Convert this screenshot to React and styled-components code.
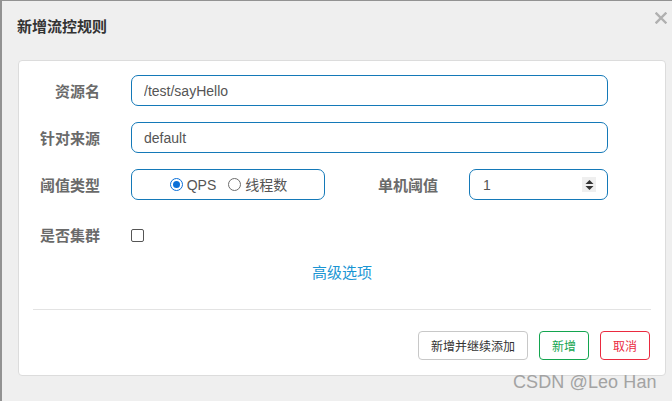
import React from "react";
import styled, { createGlobalStyle } from "styled-components";

const Global = createGlobalStyle`
  html, body { margin: 0; padding: 0; }
  body {
    background: #929292;
    font-family: "Liberation Sans", "Noto Sans CJK SC", sans-serif;
    overflow: hidden;
  }
`;

const Page = styled.div`
  position: relative;
  width: 672px;
  height: 401px;
  overflow: hidden;
`;

const Modal = styled.div`
  margin: 1px 0 0 2px;
  width: 670px;
  height: 400px;
  background: #efefef;
  display: flex;
  flex-direction: column;
`;

const Header = styled.div`
  height: 59px;
  display: flex;
  justify-content: space-between;
  align-items: flex-start;
  padding: 15px 5px 0 15px;
  box-sizing: border-box;
`;

const Title = styled.h4`
  margin: 0;
  font-size: 15px;
  line-height: 20px;
  font-weight: bold;
  color: #333;
  font-family: "Noto Sans CJK SC", sans-serif;
`;

const Close = styled.button`
  border: 0;
  background: none;
  padding: 0;
  margin-top: -4px;
  width: 12px;
  height: 12px;
  display: flex;
  cursor: pointer;
`;

const Panel = styled.div`
  margin: 0 6px 0 16px;
  background: #fff;
  border: 1px solid #dcdcdc;
  border-radius: 4px;
  padding: 14px 14px 15px 14px;
  display: flex;
  flex-direction: column;
`;

const Row = styled.div`
  display: flex;
  align-items: center;
  gap: 31px;
  height: ${(p) => p.$h || 31}px;
  margin-bottom: ${(p) => (p.$mb === undefined ? 16 : p.$mb)}px;
`;

const Label = styled.label`
  width: ${(p) => p.$w}px;
  flex: none;
  text-align: right;
  font-family: "Noto Sans CJK SC", sans-serif;
  font-size: 15px;
  font-weight: bold;
  color: #6a6a6a;
  line-height: 20px;
`;

const TextInput = styled.input`
  width: ${(p) => p.$w}px;
  height: 31px;
  box-sizing: border-box;
  border: 1px solid #1479b8;
  border-radius: 7px;
  padding: 0 12px;
  font-family: "Liberation Sans", sans-serif;
  font-size: 14px;
  color: #555;
  outline: none;
  background: #fff;
`;

const RadioBox = styled.div`
  width: 194px;
  height: 31px;
  box-sizing: border-box;
  border: 1px solid #1479b8;
  border-radius: 7px;
  display: flex;
  align-items: center;
  justify-content: center;
  gap: 12px;
  padding-left: 1px;
`;

const RadioItem = styled.label`
  display: flex;
  align-items: center;
  gap: 4px;
  font-family: "Liberation Sans", "Noto Sans CJK SC", sans-serif;
  font-size: 14px;
  color: #555;
  line-height: 18px;
`;

const RadioDot = styled.span`
  width: 13px;
  height: 13px;
  box-sizing: border-box;
  border-radius: 50%;
  border: 1px solid ${(p) => (p.$on ? "#0a6fd8" : "#6d6d6d")};
  background: #fff;
  display: flex;
  align-items: center;
  justify-content: center;
  &::after {
    content: "";
    width: 7px;
    height: 7px;
    border-radius: 50%;
    background: ${(p) => (p.$on ? "#0a6fd8" : "transparent")};
  }
`;

const NumberBox = styled.div`
  width: 139px;
  height: 31px;
  box-sizing: border-box;
  border: 1px solid #1479b8;
  border-radius: 7px;
  display: flex;
  align-items: center;
  padding: 0 11px 0 13px;
  font-family: "Liberation Sans", sans-serif;
  font-size: 14px;
  color: #555;
`;

const NumberValue = styled.span`
  flex: 1;
`;

const Spinner = styled.span`
  width: 14px;
  height: 15px;
  background: #efefef;
  display: flex;
  align-items: center;
  justify-content: center;
`;

const Check = styled.span`
  width: 13px;
  height: 13px;
  box-sizing: border-box;
  border: 1px solid #555;
  border-radius: 2px;
  background: #fff;
`;

const Advanced = styled.a`
  align-self: center;
  margin-top: 8px;
  font-family: "Noto Sans CJK SC", sans-serif;
  font-size: 15px;
  line-height: 20px;
  color: #1a95d3;
  text-decoration: none;
  cursor: pointer;
`;

const Divider = styled.hr`
  margin: 27px 0 21px 0;
  border: 0;
  border-top: 1px solid #e3e3e3;
  height: 0;
`;

const Footer = styled.div`
  display: flex;
  justify-content: flex-end;
  gap: 11px;
  padding-right: 1px;
`;

const tones = {
  def: { b: "#c8c8c8", c: "#333" },
  ok: { b: "#13a54f", c: "#13a54f" },
  danger: { b: "#ea2a3f", c: "#ea2a3f" },
};

const Btn = styled.button`
  height: 29px;
  padding: 0 12px;
  background: #fff;
  border: 1px solid ${(p) => tones[p.$tone].b};
  color: ${(p) => tones[p.$tone].c};
  border-radius: 4px;
  font-family: "Noto Sans CJK SC", sans-serif;
  font-size: 12px;
  cursor: pointer;
`;

const Watermark = styled.div`
  position: absolute;
  left: 513px;
  top: 372px;
  font-family: "Liberation Sans", sans-serif;
  font-size: 18px;
  color: #a3a3a3;
  letter-spacing: 0.1px;
  pointer-events: none;
`;

export default function App() {
  return (
    <Page>
      <Global />
      <Modal>
        <Header>
          <Title>新增流控规则</Title>
          <Close aria-label="close">
            <svg width="12" height="12" viewBox="0 0 12 12">
              <path d="M1.5 1.5 L10.5 10.5 M10.5 1.5 L1.5 10.5" stroke="#b0b0b0" strokeWidth="2.4" strokeLinecap="square" />
            </svg>
          </Close>
        </Header>
        <Panel>
          <Row>
            <Label $w={67}>资源名</Label>
            <TextInput $w={477} defaultValue="/test/sayHello" />
          </Row>
          <Row>
            <Label $w={67}>针对来源</Label>
            <TextInput $w={477} defaultValue="default" />
          </Row>
          <Row>
            <Label $w={67}>阈值类型</Label>
            <RadioBox>
              <RadioItem>
                <RadioDot $on />
                QPS
              </RadioItem>
              <RadioItem>
                <RadioDot />
                线程数
              </RadioItem>
            </RadioBox>
            <Label $w={82}>单机阈值</Label>
            <NumberBox>
              <NumberValue>1</NumberValue>
              <Spinner>
                <svg width="9" height="12" viewBox="0 0 9 12">
                  <path d="M4.5 1 L8.5 5 L0.5 5 Z" fill="#333" />
                  <path d="M0.5 7 L8.5 7 L4.5 11 Z" fill="#333" />
                </svg>
              </Spinner>
            </NumberBox>
          </Row>
          <Row $h={38} $mb={0}>
            <Label $w={67}>是否集群</Label>
            <Check />
          </Row>
          <Advanced>高级选项</Advanced>
          <Divider />
          <Footer>
            <Btn $tone="def">新增并继续添加</Btn>
            <Btn $tone="ok">新增</Btn>
            <Btn $tone="danger">取消</Btn>
          </Footer>
        </Panel>
      </Modal>
      <Watermark>CSDN @Leo Han</Watermark>
    </Page>
  );
}
